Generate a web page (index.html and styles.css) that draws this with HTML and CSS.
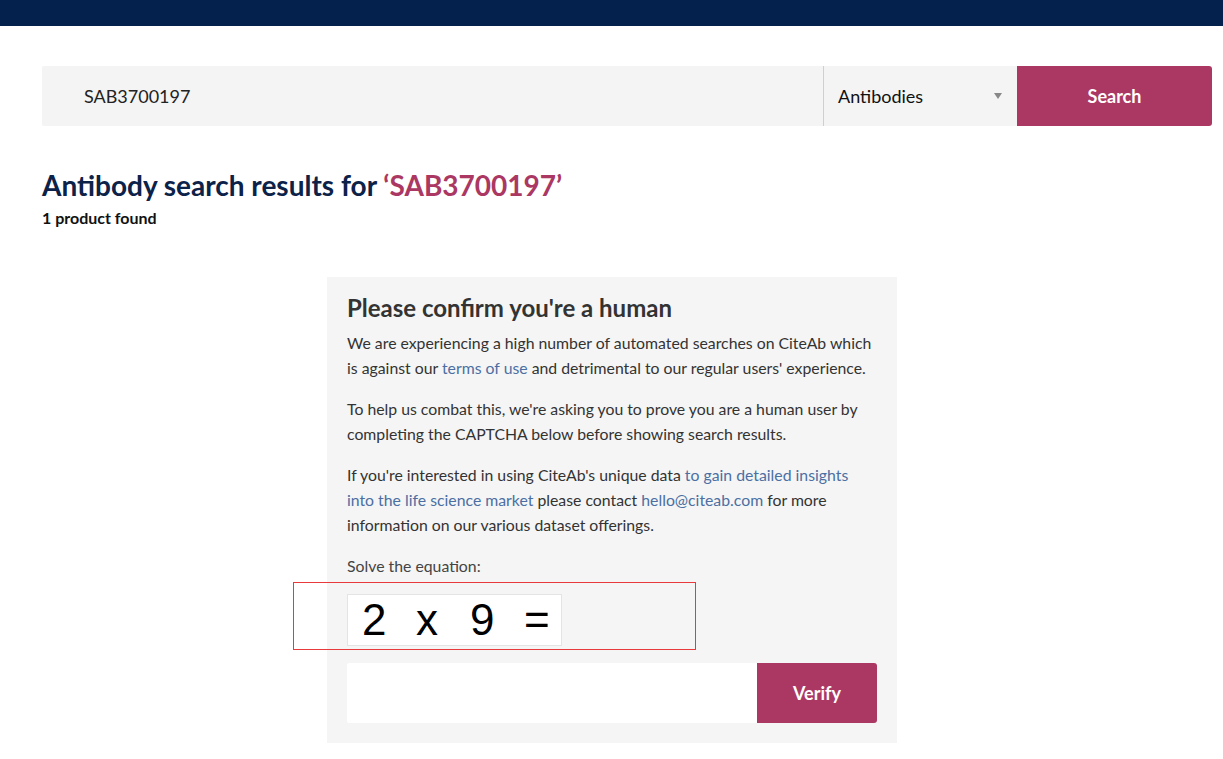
FILE: index.html
```html
<!DOCTYPE html>
<html>
<head>
<meta charset="utf-8">
<link rel="stylesheet" href="styles.css">
</head>
<body>
<div class="topbar"></div>
<div class="container">
  <form class="search">
    <div class="search-input">SAB3700197</div>
    <div class="search-select">Antibodies<span class="caret"></span></div>
    <div class="search-btn">Search</div>
  </form>
  <h1 class="title">Antibody search results for <span class="q">‘SAB3700197’</span></h1>
  <div class="count">1 product found</div>
</div>
<div class="captcha-wrap">
  <div class="captcha">
    <h2>Please confirm you're a human</h2>
    <p>We are experiencing a high number of automated searches on CiteAb which is against our <a>terms of use</a> and detrimental to our regular users' experience.</p>
    <p>To help us combat this, we're asking you to prove you are a human user by completing the CAPTCHA below before showing search results.</p>
    <p>If you're interested in using CiteAb's unique data <a>to gain detailed insights into the life science market</a> please contact <a>hello@citeab.com</a> for more information on our various dataset offerings.</p>
    <p class="label">Solve the equation:</p>
    <div class="eq-row">
      <div class="eq"><span>2</span><span>x</span><span>9</span><span>=</span></div>
      <div class="highlight"></div>
    </div>
    <div class="verify">
      <div class="verify-input"></div>
      <div class="verify-btn">Verify</div>
    </div>
  </div>
</div>
</body>
</html>
```
FILE: styles.css
```css
html, body { margin: 0; padding: 0; background: #fff; }
body { font-family: Lato, "Open Sans", sans-serif; color: #333; }
.topbar { height: 26px; background: #03214c; }
.container { width: 1170px; padding-left: 42px; }
.search { display: flex; height: 60px; margin-top: 40px; }
.search-input {
  flex: 1; background: #f4f4f4; border-radius: 2px 0 0 2px;
  padding-left: 42px; font-size: 18px; line-height: 60px; color: #222;
}
.search-select {
  width: 179px; background: #f4f4f4; border-left: 1px solid #cfcfcf;
  padding-left: 14px; font-size: 18px; line-height: 60px; color: #111;
  position: relative;
}
.caret {
  position: absolute; right: 15px; top: 27px;
  border-left: 4px solid transparent; border-right: 4px solid transparent;
  border-top: 6px solid #888;
}
.search-btn {
  width: 195px; background: #ab3862; color: #fff; font-weight: 700;
  font-size: 18px; line-height: 60px; text-align: center; border-radius: 0 3px 3px 0;
}
.title {
  margin: 43px 0 0; font-size: 28px; line-height: 1.2; font-weight: 700; color: #0c2249;
}
.title .q { color: #ab3862; }
.count { margin-top: 6px; font-size: 16px; line-height: 18px; font-weight: 700; color: #111; }
.captcha-wrap { padding-top: 50px; }
.captcha {
  width: 530px; margin: 0 auto; background: #f5f5f5;
  padding: 17px 20px 20px; position: relative; left: 0.5px;
}
.captcha h2 { margin: 0 0 8px; font-size: 24px; line-height: 1.2; font-weight: 700; color: #333; }
.captcha p { margin: 0 0 16px; font-size: 15.8px; line-height: 25px; color: #333; }
.captcha a { color: #4b6fa3; }
.captcha p.label { margin-bottom: 16px; color: #444; }
.eq-row { position: relative; }
.eq {
  height: 50px; background: #fff; border: 1px solid #e4e4e4;
  display: flex; padding-left: 14px; box-sizing: content-box;
  font-family: "Liberation Sans", Arial, sans-serif; font-size: 44px; line-height: 50px; color: #000;
  width: 199px;
}
.eq span { width: 54px; flex: none; }
.highlight {
  position: absolute; left: -54px; top: -12px; width: 401px; height: 66px;
  border: 1px solid #e8393c;
}
.verify { display: flex; margin-top: 17px; height: 60px; }
.verify-input { width: 410px; background: #fff; border-radius: 2px 0 0 2px; }
.verify-btn {
  width: 120px; background: #ab3862; color: #fff; font-size: 18px; font-weight: 700;
  line-height: 60px; text-align: center; border-radius: 0 3px 3px 0;
}
```
